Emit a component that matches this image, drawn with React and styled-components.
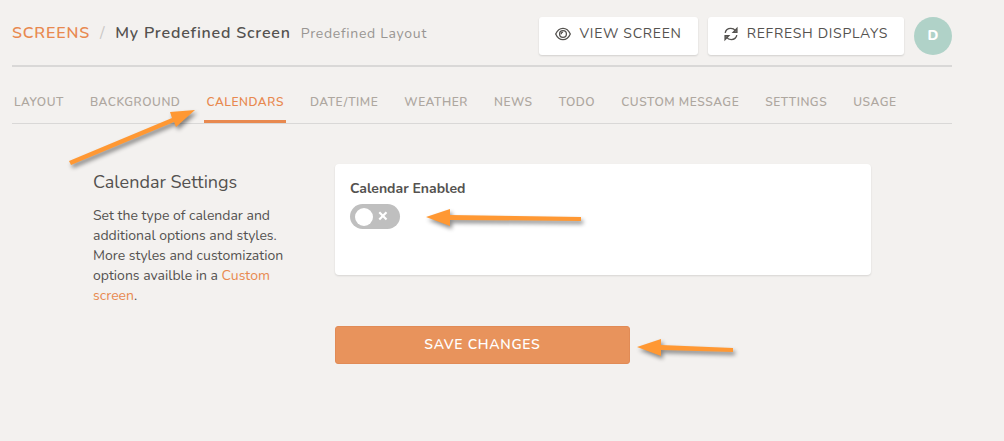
import React from "react";
import styled, { createGlobalStyle } from "styled-components";

const Global = createGlobalStyle`
  *, *::before, *::after { box-sizing: border-box; }
  body {
    margin: 0;
    background: #f3f1ef;
    color: #54524f;
    font: 14px/20px Nunito, Lato, "Open Sans", sans-serif;
  }
`;

const Page = styled.div`
  padding: 17px 52px 40px 12px;
`;

const Header = styled.header`
  display: flex;
  justify-content: space-between;
  align-items: flex-start;
  padding-bottom: 10px;
  border-bottom: 2px solid #d9d8d7;
`;

const Breadcrumb = styled.h1`
  display: flex;
  align-items: baseline;
  gap: 10px;
  margin: 4px 0 0;
  font-size: 16px;
  line-height: 24px;
  font-weight: 600;
  letter-spacing: 0.05em;
  white-space: nowrap;
`;

const Link = styled.a`
  color: #e8894f;
  text-decoration: none;
`;

const Slash = styled.span`
  color: #c9c7c5;
  font-weight: 400;
`;

const Kind = styled.small`
  color: #989592;
  font-size: 14px;
  font-weight: 400;
  letter-spacing: 0.05em;
`;

const Actions = styled.div`
  display: flex;
  gap: 10px;
`;

const ActionButton = styled.button`
  display: flex;
  gap: 9px;
  height: 38px;
  padding: 7px 16px;
  border: 0;
  border-radius: 3px;
  background: #fff;
  box-shadow: 0 1px 2px rgba(0, 0, 0, 0.14);
  color: #54524f;
  font: inherit;
  letter-spacing: 0.05em;
  white-space: nowrap;
`;

const Avatar = styled.button`
  width: 38px;
  height: 38px;
  padding: 0;
  border: 0;
  border-radius: 50%;
  background: #b0d2c8;
  color: #fff;
  font: inherit;
  font-weight: 800;
`;

const Tabs = styled.nav`
  display: flex;
  gap: 22px;
  padding-top: 19px;
  border-bottom: 1px solid #d9d8d7;
`;

const Tab = styled.a`
  position: relative;
  padding: 6px 2px 8px;
  border-bottom: 3px solid ${(p) => (p.$active ? "#e8894f" : "transparent")};
  color: ${(p) => (p.$active ? "#e8894f" : "#aea79f")};
  font-size: 12px;
  font-weight: 600;
  letter-spacing: 0.045em;
  text-decoration: none;
  white-space: nowrap;
`;

const Content = styled.main`
  display: grid;
  grid-template-columns: 200px 1fr;
  column-gap: 42px;
  padding: 40px 81px 0;
`;

const SectionTitle = styled.h2`
  margin: 5px 0 11px;
  font-size: 18px;
  line-height: 26px;
  font-weight: 400;
`;

const Text = styled.p`
  margin: 0;
`;

const Card = styled.section`
  min-height: 111px;
  padding: 15px;
  border-radius: 4px;
  background: #fff;
  box-shadow: 0 1px 2px rgba(0, 0, 0, 0.12);
`;

const FieldLabel = styled.label`
  display: block;
  margin-bottom: 5px;
  font-weight: 700;
`;

const SwitchWrap = styled.div`
  position: relative;
  width: 50px;
  height: 25px;
`;

const Switch = styled.input`
  appearance: none;
  display: block;
  width: 50px;
  height: 25px;
  margin: 0;
  border-radius: 13px;
  background: #bfbfbf;
  &::before {
    content: "";
    display: block;
    width: 18px;
    height: 18px;
    margin: 4px 5px;
    border-radius: 50%;
    background: #fff;
  }
`;

const Cross = styled.svg`
  position: absolute;
  top: 8px;
  left: 29px;
  overflow: visible;
  pointer-events: none;
`;

const SaveWrap = styled.div`
  position: relative;
  width: 55%;
  margin-top: 51px;
`;

const SaveButton = styled.button`
  display: block;
  width: 100%;
  height: 38px;
  padding: 0;
  border: 1px solid #e18b56;
  border-radius: 3px;
  background: #e8935c;
  color: #fff;
  font: inherit;
  font-weight: 600;
  letter-spacing: 0.05em;
`;

const ArrowSvg = styled.svg`
  position: absolute;
  top: ${(p) => p.$top}px;
  left: ${(p) => p.$left};
  overflow: visible;
  pointer-events: none;
  filter: drop-shadow(2px 3px 2px rgba(0, 0, 0, 0.45));
`;

function Arrow({ top, left, width, height, points }) {
  return (
    <ArrowSvg $top={top} $left={left} width={width} height={height} aria-hidden="true">
      <polygon points={points} fill="#ff9833" />
    </ArrowSvg>
  );
}

const EyeIcon = () => (
  <svg width="16" height="20" viewBox="0 0 16 20" fill="none" stroke="currentColor" strokeWidth="1.3" aria-hidden="true">
    <path d="M.7 10C2.300 6.300 4.900 4.300 8 4.300s5.700 2 7.300 5.700C13.700 13.700 11.100 15.700 8 15.700S2.300 13.700.7 10Z" />
    <circle cx="8" cy="10" r="3.400" />
    <path d="M6.200 10.200c0-1.200.8-2 1.900-2" />
  </svg>
);

const RefreshIcon = () => (
  <svg width="14" height="20" viewBox="0 0 14 20" fill="none" stroke="currentColor" strokeWidth="1.400" aria-hidden="true">
    <path d="M1.200 8.800C1.700 6.200 4 4.400 6.800 4.400c2 0 3.500.8 4.600 2.200M12.800 11.200c-.5 2.600-2.800 4.400-5.600 4.400-2 0-3.500-.8-4.600-2.200" />
    <path d="M12.900 4.500v3.700H9.300ZM1.100 15.500v-3.700h3.600Z" fill="currentColor" fillOpacity="0.500" />
  </svg>
);

const tabs = ["LAYOUT", "BACKGROUND", "CALENDARS", "DATE/TIME", "WEATHER", "NEWS", "TODO", "CUSTOM MESSAGE", "SETTINGS", "USAGE"];

export default function App() {
  return (
    <>
      <Global />
      <Page>
        <Header>
          <Breadcrumb>
            <Link href="#screens">SCREENS</Link>
            <Slash>/</Slash>
            <span>My Predefined Screen</span>
            <Kind>Predefined Layout</Kind>
          </Breadcrumb>
          <Actions>
            <ActionButton><EyeIcon />VIEW SCREEN</ActionButton>
            <ActionButton><RefreshIcon />REFRESH DISPLAYS</ActionButton>
            <Avatar>D</Avatar>
          </Actions>
        </Header>
        <Tabs>
          {tabs.map((name) => (
            <Tab key={name} href="#tab" $active={name === "CALENDARS"}>
              {name}
              {name === "CALENDARS" && (
                <Arrow top={25} left="-135px" width={126} height={56}
                  points="0,50 103,7 101,1 126,-1 107,16 105,11 2,54" />
              )}
            </Tab>
          ))}
        </Tabs>
        <Content>
          <div>
            <SectionTitle>Calendar Settings</SectionTitle>
            <Text>
              Set the type of calendar and additional options and styles. More styles and
              customization options availble in a <Link href="#custom">Custom screen</Link>.
            </Text>
          </div>
          <div>
            <Card>
              <FieldLabel htmlFor="calendar-enabled">Calendar Enabled</FieldLabel>
              <SwitchWrap>
                <Switch type="checkbox" role="switch" id="calendar-enabled" />
                <Cross width="8" height="8" viewBox="0 0 8 8" stroke="#fff" strokeWidth="2.200" aria-hidden="true">
                  <path d="M.3.3l7.200 7.200M7.500.3.3 7.500" />
                </Cross>
                <Arrow top={5} left="76px" width={156} height={17}
                  points="0,8 24,0 24,6 155,8 155,12 24,11 24,17" />
              </SwitchWrap>
            </Card>
            <SaveWrap>
              <SaveButton>SAVE CHANGES</SaveButton>
              <Arrow top={13} left="calc(100% + 7px)" width={97} height={17}
                points="0,8 24,0 24,6 96,9 96,13 24,11 24,17" />
            </SaveWrap>
          </div>
        </Content>
      </Page>
    </>
  );
}
